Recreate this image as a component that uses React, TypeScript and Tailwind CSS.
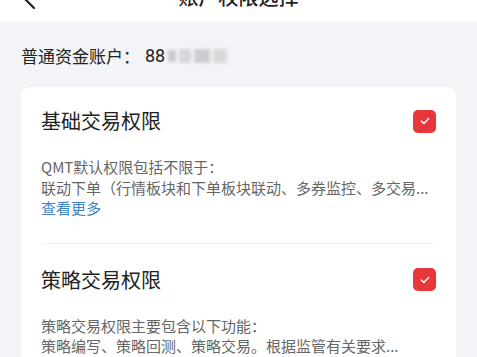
import React from 'react';

type Permission = {
  id: string;
  title: string;
  lines: string[];
  checked: boolean;
};

const permissions: Permission[] = [
  {
    id: 'basic',
    title: '基础交易权限',
    lines: ['QMT默认权限包括不限于：', '联动下单（行情板块和下单板块联动、多券监控、多交易...'],
    checked: true,
  },
  {
    id: 'strategy',
    title: '策略交易权限',
    lines: ['策略交易权限主要包含以下功能：', '策略编写、策略回测、策略交易。根据监管有关要求...'],
    checked: true,
  },
];

const CheckBox = ({ checked }: { checked: boolean }) => (
  <div
    className={`flex h-[23px] w-[23px] items-center justify-center rounded-[5px] ${
      checked ? 'bg-[#e8373c]' : 'border border-gray-300 bg-white'
    }`}
  >
    {checked && (
      <svg width="10" height="8" viewBox="0 0 10 8" fill="none">
        <path d="M1.3 4 L3.9 6.4 L8.7 1.6" stroke="white" strokeWidth="1.4" strokeLinecap="round" strokeLinejoin="round" />
      </svg>
    )}
  </div>
);

const App = () => {
  return (
    <div
      className="min-h-[357px] w-full bg-[#f3f4f8] text-[#222]"
      style={{ fontFamily: '"Noto Sans CJK SC", "Noto Sans", sans-serif' }}
    >
      {/* Header, scrolled partly out of view */}
      <header className="-mt-[26px] flex h-[48px] items-center bg-white px-[23px]">
        <svg width="14" height="20" viewBox="0 0 14 20" fill="none" className="mt-[2px]">
          <path d="M11 1 L2 10 L11 19" stroke="#222" strokeWidth="2.2" strokeLinecap="round" strokeLinejoin="round" />
        </svg>
        <h1 className="-mt-[2px] flex-1 pr-[14px] text-center text-[20px] leading-[28px] font-medium">账户权限选择</h1>
      </header>

      <div className="flex h-[65px] items-center px-[21px] pt-[2px] text-[17px] leading-[24px]">
        <span>普通资金账户：</span>
        <span className="ml-[5px] text-[18px]" style={{ fontFamily: 'Roboto, "Noto Sans", sans-serif' }}>
          88
        </span>
        <span className="ml-[3px] flex h-[15px] items-center gap-[3px] blur-[1.5px]">
          <span className="h-[12px] w-[8px] bg-[#c9c9cc]" />
          <span className="h-[14px] w-[12px] bg-[#d6d6da]" />
          <span className="h-[14px] w-[16px] bg-[#cdcdd1]" />
          <span className="h-[14px] w-[14px] bg-[#d9d9dc]" />
        </span>
      </div>

      <div className="mx-[21px] rounded-[9px] bg-white">
        {permissions.map((p, i) => (
          <section key={p.id}>
            {i > 0 && <div className="ml-[21px] mr-[23px] h-px bg-[#efeff2]" />}
            <div className={`px-[20px] pb-[24px] ${i === 0 ? 'pt-[20px]' : 'pt-[22px]'}`}>
              <div className="flex items-center justify-between">
                <h2 className="text-[20px] leading-[28px]">{p.title}</h2>
                <CheckBox checked={p.checked} />
              </div>
              <div className="mt-[22px] text-[15px] leading-[20.5px] text-[#666]">
                {p.lines.map(line => (
                  <p key={line} className="whitespace-nowrap">
                    {line}
                  </p>
                ))}
                <p className="text-[#3f82c6]">查看更多</p>
              </div>
            </div>
          </section>
        ))}
      </div>
    </div>
  );
};

export default App;
